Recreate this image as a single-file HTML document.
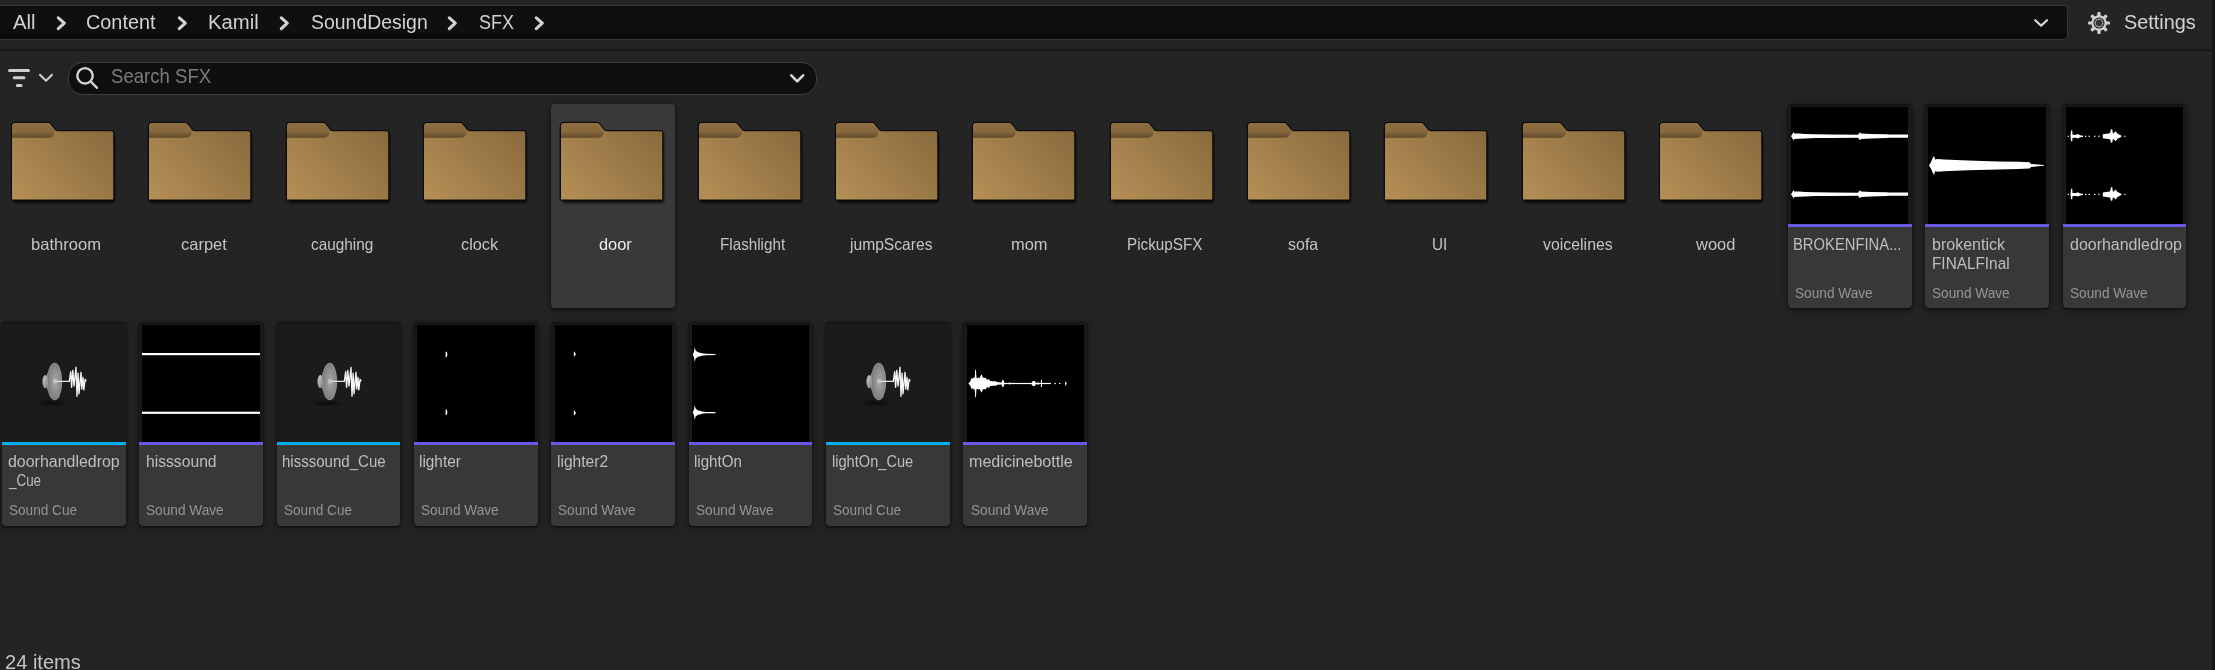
<!DOCTYPE html><html><head><meta charset="utf-8"><style>
*{margin:0;padding:0;box-sizing:border-box}
html,body{width:2215px;height:670px;overflow:hidden;background:#242424}
body{position:relative;font-family:"Liberation Sans",sans-serif}
.a{position:absolute}
.t{position:absolute;white-space:pre;line-height:1;transform-origin:0 0}
svg{position:absolute;overflow:visible}
.tile{position:absolute;border-radius:4px;box-shadow:0 1px 2.5px rgba(0,0,0,.55),0 2px 8px rgba(0,0,0,.4)}
.lab{position:absolute;left:0;right:0;bottom:0;background:#383838;border-radius:0 0 4px 4px}
</style></head><body><div class="a" style="left:0;top:0;width:2215px;height:50px;background:#242424"></div>
<div class="a" style="left:0;top:49.0px;width:2215px;height:3.4px;background:linear-gradient(#191919,#171717 45%,#1d1d1d 70%,#242424)"></div>
<div class="a" style="left:-6px;top:5.4px;width:2074.3px;height:34.3px;background:linear-gradient(#0f0f0f 0,#0f0f0f 76%,#0a0a0a 88%,#0b0b0b 100%);border:1.8px solid #353535;border-radius:4px"></div>
<div class="t" style="left:13.30px;top:12.07px;font-size:20px;color:#d2d2d2;transform:scaleX(1.0145)">All</div>
<div class="t" style="left:86.21px;top:12.07px;font-size:20px;color:#d2d2d2;transform:scaleX(0.9915)">Content</div>
<div class="t" style="left:207.58px;top:12.07px;font-size:20px;color:#d2d2d2;transform:scaleX(1.0151)">Kamil</div>
<div class="t" style="left:311.00px;top:12.07px;font-size:20px;color:#d2d2d2;transform:scaleX(0.9717)">SoundDesign</div>
<div class="t" style="left:478.50px;top:12.07px;font-size:20px;color:#d2d2d2;transform:scaleX(0.9000)">SFX</div>
<svg style="left:56.30px;top:15.7px" width="11" height="14"><polyline points="2.3,1.8 8.3,7.2 2.3,12.6" fill="none" stroke="#d2d2d2" stroke-width="3.1" stroke-linecap="round" stroke-linejoin="round"/></svg>
<svg style="left:176.60px;top:15.7px" width="11" height="14"><polyline points="2.3,1.8 8.3,7.2 2.3,12.6" fill="none" stroke="#d2d2d2" stroke-width="3.1" stroke-linecap="round" stroke-linejoin="round"/></svg>
<svg style="left:279.00px;top:15.7px" width="11" height="14"><polyline points="2.3,1.8 8.3,7.2 2.3,12.6" fill="none" stroke="#d2d2d2" stroke-width="3.1" stroke-linecap="round" stroke-linejoin="round"/></svg>
<svg style="left:447.00px;top:15.7px" width="11" height="14"><polyline points="2.3,1.8 8.3,7.2 2.3,12.6" fill="none" stroke="#d2d2d2" stroke-width="3.1" stroke-linecap="round" stroke-linejoin="round"/></svg>
<svg style="left:534.00px;top:15.7px" width="11" height="14"><polyline points="2.3,1.8 8.3,7.2 2.3,12.6" fill="none" stroke="#d2d2d2" stroke-width="3.1" stroke-linecap="round" stroke-linejoin="round"/></svg>
<svg style="left:2034px;top:19px" width="15" height="8"><polyline points="1.2,1.2 7.1,6.6 13,1.2" fill="none" stroke="#d6d6d6" stroke-width="2.2" stroke-linecap="round" stroke-linejoin="round"/></svg>
<svg style="left:2098.9px;top:22.7px" width="1" height="1"><g fill="#d2d2d2"><rect x="-1.6" y="-10.9" width="3.2" height="5.5" rx="0.9" transform="rotate(0)"/><rect x="-1.6" y="-10.9" width="3.2" height="5.5" rx="0.9" transform="rotate(45)"/><rect x="-1.6" y="-10.9" width="3.2" height="5.5" rx="0.9" transform="rotate(90)"/><rect x="-1.6" y="-10.9" width="3.2" height="5.5" rx="0.9" transform="rotate(135)"/><rect x="-1.6" y="-10.9" width="3.2" height="5.5" rx="0.9" transform="rotate(180)"/><rect x="-1.6" y="-10.9" width="3.2" height="5.5" rx="0.9" transform="rotate(225)"/><rect x="-1.6" y="-10.9" width="3.2" height="5.5" rx="0.9" transform="rotate(270)"/><rect x="-1.6" y="-10.9" width="3.2" height="5.5" rx="0.9" transform="rotate(315)"/><circle r="7.7"/></g><circle r="5.5" fill="#1c1c1c"/><circle r="3.7" fill="none" stroke="#989898" stroke-width="1.5"/><circle r="2.9" fill="#333"/></svg>
<div class="t" style="left:2123.90px;top:11.87px;font-size:20px;color:#d2d2d2;transform:scaleX(0.9922)">Settings</div>
<div class="a" style="left:2212.3px;top:0;width:3px;height:670px;background:#171717"></div>
<svg style="left:0;top:60px" width="60" height="30"><g stroke="#d0d0d0" stroke-width="3" stroke-linecap="round"><line x1="9.5" y1="10.4" x2="28.5" y2="10.4"/><line x1="14.3" y1="17.8" x2="23.9" y2="17.8"/><line x1="17.3" y1="25.6" x2="21" y2="25.6"/></g><polyline points="40,14.8 46,20.8 52,14.8" fill="none" stroke="#d0d0d0" stroke-width="2" stroke-linecap="round" stroke-linejoin="round"/></svg>
<div class="a" style="left:68px;top:61.5px;width:748.7px;height:33.3px;background:#0f0f0f;border:1.8px solid #3d3d3d;border-radius:15px"></div>
<svg style="left:0;top:0" width="1" height="1"><circle cx="85" cy="75.8" r="7.7" fill="none" stroke="#d4d4d4" stroke-width="2.4"/><line x1="90.6" y1="81.4" x2="97" y2="87.9" stroke="#d4d4d4" stroke-width="2.3" stroke-linecap="round"/></svg>
<div class="t" style="left:110.80px;top:65.12px;font-size:21px;color:#7c7c7c;transform:scaleX(0.8842)">Search SFX</div>
<svg style="left:789.9px;top:74px" width="15" height="9"><polyline points="1.3,1.3 7.2,7.4 13.1,1.3" fill="none" stroke="#d8d8d8" stroke-width="2.6" stroke-linecap="round" stroke-linejoin="round"/></svg>
<svg width="0" height="0" style="position:absolute"><defs>
<linearGradient id="fb" x1="0" y1="0.85" x2="1" y2="0.15"><stop offset="0" stop-color="#b28d55"/><stop offset="1" stop-color="#8a6b3e"/></linearGradient>
<linearGradient id="ft" x1="0" y1="0" x2="0" y2="1"><stop offset="0" stop-color="#8e6e40"/><stop offset="0.55" stop-color="#89693c"/><stop offset="0.8" stop-color="#735832"/><stop offset="1" stop-color="#5f4a2b"/></linearGradient>
<filter id="fs" x="-10%" y="-10%" width="130%" height="130%"><feGaussianBlur stdDeviation="1.2"/></filter>
<radialGradient id="cone" cx="0.55" cy="0.5" r="0.6"><stop offset="0" stop-color="#a8a8a8"/><stop offset="0.7" stop-color="#858585"/><stop offset="1" stop-color="#6e6e6e"/></radialGradient><linearGradient id="cyl" x1="0" y1="0" x2="1" y2="1"><stop offset="0" stop-color="#d0d0d0"/><stop offset="1" stop-color="#7a7a7a"/></linearGradient>
<filter id="blur1"><feGaussianBlur stdDeviation="1.5"/></filter>
<symbol id="folder" overflow="visible">
<rect x="1.5" y="10" width="101.5" height="70" rx="2" fill="#000" opacity="0.75" filter="url(#fs)"/>
<path d="M0,3.5 Q0,0 3.5,0 L35.5,0 Q37,0 38,1 L42.6,6.8 Q43.9,8.2 45.6,8.2 L99.5,8.2 Q101.2,8.2 101.2,10 L101.2,76.5 L0,76.5 Z" fill="none" stroke="#0d0d0d" stroke-width="2.6" stroke-linejoin="round"/>
<path d="M0,3.5 Q0,0 3.5,0 L35.5,0 Q37,0 38,1 L42.6,6.8 Q43.9,8.2 45.6,8.2 L99.5,8.2 Q101.2,8.2 101.2,10 L101.2,76.5 L0,76.5 Z" fill="url(#fb)"/>
<path d="M0,3.5 Q0,0 3.5,0 L35.5,0 Q37,0 38,1 L41.5,5.2 Q43.6,7.8 42.6,10.5 Q40.8,14.8 36.5,14.8 L0,14.8 Z" fill="url(#ft)"/>
</symbol>
<symbol id="cue" overflow="visible">
<ellipse cx="50" cy="81.3" rx="13" ry="2" fill="#000" opacity="0.55" filter="url(#blur1)"/>
<ellipse cx="43.4" cy="59.6" rx="2.9" ry="6.6" fill="url(#cyl)"/>
<path d="M45.3,53 L48.5,44 Q52.5,38.5 56.5,43.5 Q59.8,50.5 59.8,59.5 Q59.8,68.5 56.5,75.5 Q52.5,80.5 48.5,75 L45.3,66 Z" fill="url(#cone)" stroke="#a6a6a6" stroke-width="0.7"/>
<ellipse cx="53.5" cy="59.4" rx="4.2" ry="12.5" fill="none" stroke="#8e8e8e" stroke-width="0.8"/>
<circle cx="53.1" cy="59.3" r="2.3" fill="#c2c2c2"/>
<line x1="55" y1="59.4" x2="68" y2="59.4" stroke="#e2e2e2" stroke-width="1.2"/>
<path d="M67.3,59.4 L68.7,49.7 L69.6,65.3 L70.8,48.3 L72,64 L74,45.3 L75,74.3 L76.1,51.3 L77,71.8 L79,50.3 L79.8,67 L81,55.3 L81.8,67.8 L83.1,57.3 L84.2,59.4" fill="none" stroke="#f4f4f4" stroke-width="1.35" stroke-linejoin="round"/>
</symbol>
</defs></svg>
<svg style="left:11.90px;top:123.00px" width="1" height="1"><use href="#folder"/></svg>
<div class="t" style="left:31.20px;top:235.73px;font-size:16.5px;color:#c4c4c4;transform:scaleX(1.0050)">bathroom</div>
<svg style="left:149.23px;top:123.00px" width="1" height="1"><use href="#folder"/></svg>
<div class="t" style="left:181.40px;top:235.73px;font-size:16.5px;color:#c4c4c4;transform:scaleX(0.9984)">carpet</div>
<svg style="left:286.56px;top:123.00px" width="1" height="1"><use href="#folder"/></svg>
<div class="t" style="left:310.50px;top:235.73px;font-size:16.5px;color:#c4c4c4;transform:scaleX(0.9297)">caughing</div>
<svg style="left:423.89px;top:123.00px" width="1" height="1"><use href="#folder"/></svg>
<div class="t" style="left:460.50px;top:235.73px;font-size:16.5px;color:#c4c4c4;transform:scaleX(0.9885)">clock</div>
<div class="tile" style="left:551.32px;top:104.00px;width:123.8px;height:204.2px;background:#393939;"></div>
<svg style="left:561.22px;top:123.00px" width="1" height="1"><use href="#folder"/></svg>
<div class="t" style="left:599.30px;top:235.73px;font-size:16.5px;color:#ececec;transform:scaleX(0.9932)">door</div>
<svg style="left:698.55px;top:123.00px" width="1" height="1"><use href="#folder"/></svg>
<div class="t" style="left:720.08px;top:235.73px;font-size:16.5px;color:#c4c4c4;transform:scaleX(0.9224)">Flashlight</div>
<svg style="left:835.88px;top:123.00px" width="1" height="1"><use href="#folder"/></svg>
<div class="t" style="left:849.85px;top:235.73px;font-size:16.5px;color:#c4c4c4;transform:scaleX(0.9469)">jumpScares</div>
<svg style="left:973.21px;top:123.00px" width="1" height="1"><use href="#folder"/></svg>
<div class="t" style="left:1010.60px;top:235.73px;font-size:16.5px;color:#c4c4c4;transform:scaleX(0.9965)">mom</div>
<svg style="left:1110.54px;top:123.00px" width="1" height="1"><use href="#folder"/></svg>
<div class="t" style="left:1127.33px;top:235.73px;font-size:16.5px;color:#c4c4c4;transform:scaleX(0.9242)">PickupSFX</div>
<svg style="left:1247.87px;top:123.00px" width="1" height="1"><use href="#folder"/></svg>
<div class="t" style="left:1287.50px;top:235.73px;font-size:16.5px;color:#c4c4c4;transform:scaleX(0.9684)">sofa</div>
<svg style="left:1385.20px;top:123.00px" width="1" height="1"><use href="#folder"/></svg>
<div class="t" style="left:1432.37px;top:235.73px;font-size:16.5px;color:#c4c4c4;transform:scaleX(0.9319)">UI</div>
<svg style="left:1522.53px;top:123.00px" width="1" height="1"><use href="#folder"/></svg>
<div class="t" style="left:1543.00px;top:235.73px;font-size:16.5px;color:#c4c4c4;transform:scaleX(0.9626)">voicelines</div>
<svg style="left:1659.86px;top:123.00px" width="1" height="1"><use href="#folder"/></svg>
<div class="t" style="left:1696.40px;top:235.73px;font-size:16.5px;color:#c4c4c4;transform:scaleX(0.9983)">wood</div>
<div class="tile" style="left:1787.74px;top:104.00px;width:123.8px;height:204.2px;background:#1a1a1a;overflow:hidden">
<div class="a" style="left:0;top:0;width:100%;height:2.2px;background:rgba(0,0,0,.2)"></div><div class="a" style="left:0;top:0;width:1.8px;height:120px;background:rgba(0,0,0,.1)"></div>
<div class="a" style="left:3.2px;top:3px;width:117.40px;height:116.90px;background:#000;overflow:hidden"><svg style="left:0;top:0" width="118" height="117"><g fill="#fff"><path d="M0,29.2 L1.6,26.7 L2.3,25.0 L3.2,26.4 L8,26.599999999999998 L14,27.0 L25,27.3 L40,27.5 L67,27.7 L68.3,26.0 L69,25.2 L70,26.4 L80,27.0 L96,27.3 L97,27.599999999999998 L118,27.599999999999998 L118,30.8 L97,30.8 L96,31.099999999999998 L80,31.4 L70,32.0 L69,33.2 L68.3,32.4 L67,30.7 L40,30.9 L25,31.099999999999998 L14,31.4 L8,31.8 L3.2,32.0 L2.3,33.4 L1.6,31.7 Z"/><path d="M0,87.2 L1.6,84.7 L2.3,83.0 L3.2,84.4 L8,84.60000000000001 L14,85.0 L25,85.3 L40,85.5 L67,85.7 L68.3,84.0 L69,83.2 L70,84.4 L80,85.0 L96,85.3 L97,85.60000000000001 L118,85.60000000000001 L118,88.8 L97,88.8 L96,89.10000000000001 L80,89.4 L70,90.0 L69,91.2 L68.3,90.4 L67,88.7 L40,88.9 L25,89.10000000000001 L14,89.4 L8,89.8 L3.2,90.0 L2.3,91.4 L1.6,89.7 Z"/></g></svg></div>
<div class="a" style="left:0;top:119.9px;width:123.8px;height:3.4px;background:#6858e6"></div>
<div class="lab" style="top:123.30000000000001px"></div>
</div>
<div class="t" style="left:1793.18px;top:237.16px;font-size:16px;color:#bebebe;transform:scaleX(0.9242)">BROKENFINA...</div>
<div class="t" style="left:1794.84px;top:285.10px;font-size:15px;color:#959595;transform:scaleX(0.9108)">Sound Wave</div>
<div class="tile" style="left:1925.12px;top:104.00px;width:123.8px;height:204.2px;background:#1a1a1a;overflow:hidden">
<div class="a" style="left:0;top:0;width:100%;height:2.2px;background:rgba(0,0,0,.2)"></div><div class="a" style="left:0;top:0;width:1.8px;height:120px;background:rgba(0,0,0,.1)"></div>
<div class="a" style="left:3.2px;top:3px;width:117.40px;height:116.90px;background:#000;overflow:hidden"><svg style="left:0;top:0" width="118" height="117"><g fill="#fff"><path d="M1,58.4 L3,55 L5.2,50 L6.2,49 L7,52.5 L10,52 L16,52.6 L40,53.6 L70,54.4 L90,54.8 L101.5,55.2 L103,56.9 L110,57.6 L116,58.1 L116,58.7 L110,59.2 L103,60 L101.5,61.6 L90,62 L70,62.4 L40,63.2 L16,64.2 L10,64.8 L7,64.3 L6.2,67.8 L5.2,66.8 L3,61.8 Z"/></g></svg></div>
<div class="a" style="left:0;top:119.9px;width:123.8px;height:3.4px;background:#6858e6"></div>
<div class="lab" style="top:123.30000000000001px"></div>
</div>
<div class="t" style="left:1931.50px;top:237.16px;font-size:16px;color:#bebebe;transform:scaleX(1.0011)">brokentick</div>
<div class="t" style="left:1931.54px;top:256.16px;font-size:16px;color:#bebebe;transform:scaleX(0.9589)">FINALFInal</div>
<div class="t" style="left:1932.22px;top:285.10px;font-size:15px;color:#959595;transform:scaleX(0.9108)">Sound Wave</div>
<div class="tile" style="left:2062.50px;top:104.00px;width:123.8px;height:204.2px;background:#1a1a1a;overflow:hidden">
<div class="a" style="left:0;top:0;width:100%;height:2.2px;background:rgba(0,0,0,.2)"></div><div class="a" style="left:0;top:0;width:1.8px;height:120px;background:rgba(0,0,0,.1)"></div>
<div class="a" style="left:3.2px;top:3px;width:117.40px;height:116.90px;background:#000;overflow:hidden"><svg style="left:0;top:0" width="118" height="117"><g fill="#fff"><rect x="1.6" y="28.7" width="1.2" height="1.2"/><path d="M4.5,29.3 L5,23.6 L6.3,23.6 L6.5,27.8 L10,27.8 L12,27.1 L14,28.3 L17,28.7 L17,29.900000000000002 L14,30.3 L12,31.5 L10,30.8 L6.5,30.8 L6.3,34.2 L5,34.2 Z"/><rect x="19" y="28.7" width="1.3" height="1.2"/><rect x="22.5" y="28.7" width="1.3" height="1.2"/><rect x="28" y="28.7" width="1.3" height="1.2"/><rect x="32.3" y="28.7" width="1.3" height="1.2"/><path d="M36.8,27.3 L44,26.3 L45,22.200000000000003 L46.2,22.200000000000003 L47,26.8 L49.6,24.3 L51.5,26.8 L55.3,28.6 L55.3,30.0 L51.5,31.8 L49.6,34.3 L47,31.8 L46.2,35.7 L45,35.7 L44,32.3 L36.8,31.3 Z"/><rect x="58.3" y="28.7" width="1.2" height="1.2"/><rect x="1.6" y="86.80000000000001" width="1.2" height="1.2"/><path d="M4.5,87.4 L5,81.7 L6.3,81.7 L6.5,85.9 L10,85.9 L12,85.2 L14,86.4 L17,86.80000000000001 L17,88.0 L14,88.4 L12,89.60000000000001 L10,88.9 L6.5,88.9 L6.3,92.30000000000001 L5,92.30000000000001 Z"/><rect x="19" y="86.80000000000001" width="1.3" height="1.2"/><rect x="22.5" y="86.80000000000001" width="1.3" height="1.2"/><rect x="28" y="86.80000000000001" width="1.3" height="1.2"/><rect x="32.3" y="86.80000000000001" width="1.3" height="1.2"/><path d="M36.8,85.4 L44,84.4 L45,80.30000000000001 L46.2,80.30000000000001 L47,84.9 L49.6,82.4 L51.5,84.9 L55.3,86.7 L55.3,88.10000000000001 L51.5,89.9 L49.6,92.4 L47,89.9 L46.2,93.80000000000001 L45,93.80000000000001 L44,90.4 L36.8,89.4 Z"/><rect x="58.3" y="86.80000000000001" width="1.2" height="1.2"/></g></svg></div>
<div class="a" style="left:0;top:119.9px;width:123.8px;height:3.4px;background:#6858e6"></div>
<div class="lab" style="top:123.30000000000001px"></div>
</div>
<div class="t" style="left:2069.60px;top:237.16px;font-size:16px;color:#bebebe;transform:scaleX(0.9983)">doorhandledrop</div>
<div class="t" style="left:2069.60px;top:285.10px;font-size:15px;color:#959595;transform:scaleX(0.9108)">Sound Wave</div>
<div class="tile" style="left:1.80px;top:321.70px;width:123.8px;height:204.2px;background:#1b1b1b;overflow:hidden">
<div class="a" style="left:0;top:0;width:100%;height:2.2px;background:rgba(0,0,0,.2)"></div><div class="a" style="left:0;top:0;width:1.8px;height:120px;background:rgba(0,0,0,.1)"></div>
<svg style="left:0;top:0" width="1" height="1"><use href="#cue"/></svg>
<div class="a" style="left:0;top:119.9px;width:123.8px;height:3.4px;background:#00aef0"></div>
<div class="lab" style="top:123.30000000000001px"></div>
</div>
<div class="t" style="left:8.20px;top:454.36px;font-size:16px;color:#bebebe;transform:scaleX(0.9965)">doorhandledrop</div>
<div class="t" style="left:9.04px;top:473.36px;font-size:16px;color:#bebebe;transform:scaleX(0.8386)">_Cue</div>
<div class="t" style="left:8.90px;top:501.60px;font-size:15px;color:#959595;transform:scaleX(0.9061)">Sound Cue</div>
<div class="tile" style="left:139.18px;top:321.70px;width:123.8px;height:204.2px;background:#1a1a1a;overflow:hidden">
<div class="a" style="left:0;top:0;width:100%;height:2.2px;background:rgba(0,0,0,.2)"></div><div class="a" style="left:0;top:0;width:1.8px;height:120px;background:rgba(0,0,0,.1)"></div>
<div class="a" style="left:3.2px;top:3px;width:117.40px;height:116.90px;background:#000;overflow:hidden"><svg style="left:0;top:0" width="118" height="117"><g fill="#fff"><rect x="0" y="28.0" width="118" height="2.2"/><rect x="0" y="86.7" width="118" height="2.2"/></g></svg></div>
<div class="a" style="left:0;top:119.9px;width:123.8px;height:3.4px;background:#6858e6"></div>
<div class="lab" style="top:123.30000000000001px"></div>
</div>
<div class="t" style="left:145.52px;top:454.36px;font-size:16px;color:#bebebe;transform:scaleX(0.9794)">hisssound</div>
<div class="t" style="left:146.28px;top:501.60px;font-size:15px;color:#959595;transform:scaleX(0.9108)">Sound Wave</div>
<div class="tile" style="left:276.56px;top:321.70px;width:123.8px;height:204.2px;background:#1b1b1b;overflow:hidden">
<div class="a" style="left:0;top:0;width:100%;height:2.2px;background:rgba(0,0,0,.2)"></div><div class="a" style="left:0;top:0;width:1.8px;height:120px;background:rgba(0,0,0,.1)"></div>
<svg style="left:0;top:0" width="1" height="1"><use href="#cue"/></svg>
<div class="a" style="left:0;top:119.9px;width:123.8px;height:3.4px;background:#00aef0"></div>
<div class="lab" style="top:123.30000000000001px"></div>
</div>
<div class="t" style="left:282.36px;top:454.36px;font-size:16px;color:#bebebe;transform:scaleX(0.9397)">hisssound_Cue</div>
<div class="t" style="left:283.66px;top:501.60px;font-size:15px;color:#959595;transform:scaleX(0.9061)">Sound Cue</div>
<div class="tile" style="left:413.94px;top:321.70px;width:123.8px;height:204.2px;background:#1a1a1a;overflow:hidden">
<div class="a" style="left:0;top:0;width:100%;height:2.2px;background:rgba(0,0,0,.2)"></div><div class="a" style="left:0;top:0;width:1.8px;height:120px;background:rgba(0,0,0,.1)"></div>
<div class="a" style="left:3.2px;top:3px;width:117.40px;height:116.90px;background:#000;overflow:hidden"><svg style="left:0;top:0" width="118" height="117"><g fill="#fff"><path d="M28.6,26.8 L29.8,26.8 L30.0,28.7 L30.8,29.5 L30.0,30.3 L29.8,32.2 L28.6,32.2 Z"/><path d="M28.6,84.5 L29.8,84.5 L30.0,86.4 L30.8,87.2 L30.0,88.0 L29.8,89.9 L28.6,89.9 Z"/></g></svg></div>
<div class="a" style="left:0;top:119.9px;width:123.8px;height:3.4px;background:#6858e6"></div>
<div class="lab" style="top:123.30000000000001px"></div>
</div>
<div class="t" style="left:419.44px;top:454.36px;font-size:16px;color:#bebebe;transform:scaleX(0.9595)">lighter</div>
<div class="t" style="left:421.04px;top:501.60px;font-size:15px;color:#959595;transform:scaleX(0.9108)">Sound Wave</div>
<div class="tile" style="left:551.32px;top:321.70px;width:123.8px;height:204.2px;background:#1a1a1a;overflow:hidden">
<div class="a" style="left:0;top:0;width:100%;height:2.2px;background:rgba(0,0,0,.2)"></div><div class="a" style="left:0;top:0;width:1.8px;height:120px;background:rgba(0,0,0,.1)"></div>
<div class="a" style="left:3.2px;top:3px;width:117.40px;height:116.90px;background:#000;overflow:hidden"><svg style="left:0;top:0" width="118" height="117"><g fill="#fff"><path d="M18.8,26.2 L21.1,29.0 L18.8,31.8 Z"/><path d="M18.8,85.10000000000001 L21.1,87.9 L18.8,90.7 Z"/></g></svg></div>
<div class="a" style="left:0;top:119.9px;width:123.8px;height:3.4px;background:#6858e6"></div>
<div class="lab" style="top:123.30000000000001px"></div>
</div>
<div class="t" style="left:557.22px;top:454.36px;font-size:16px;color:#bebebe;transform:scaleX(0.9752)">lighter2</div>
<div class="t" style="left:558.42px;top:501.60px;font-size:15px;color:#959595;transform:scaleX(0.9108)">Sound Wave</div>
<div class="tile" style="left:688.70px;top:321.70px;width:123.8px;height:204.2px;background:#1a1a1a;overflow:hidden">
<div class="a" style="left:0;top:0;width:100%;height:2.2px;background:rgba(0,0,0,.2)"></div><div class="a" style="left:0;top:0;width:1.8px;height:120px;background:rgba(0,0,0,.1)"></div>
<div class="a" style="left:3.2px;top:3px;width:117.40px;height:116.90px;background:#000;overflow:hidden"><svg style="left:0;top:0" width="118" height="117"><g fill="#fff"><path d="M0.7,29.5 L2,26.5 L2.7,22.1 L3.6,25.5 L6,27.3 L8,27.7 L10,28.3 L14,28.8 L23.5,28.9 L23.5,30.1 L14,30.2 L10,30.7 L8,31.3 L6,31.7 L3.6,33.5 L2.7,36.9 L2,32.5 Z"/><path d="M0.7,87.6 L2,84.6 L2.7,80.19999999999999 L3.6,83.6 L6,85.39999999999999 L8,85.8 L10,86.39999999999999 L14,86.89999999999999 L23.5,87.0 L23.5,88.19999999999999 L14,88.3 L10,88.8 L8,89.39999999999999 L6,89.8 L3.6,91.6 L2.7,95.0 L2,90.6 Z"/></g></svg></div>
<div class="a" style="left:0;top:119.9px;width:123.8px;height:3.4px;background:#6858e6"></div>
<div class="lab" style="top:123.30000000000001px"></div>
</div>
<div class="t" style="left:694.46px;top:454.36px;font-size:16px;color:#bebebe;transform:scaleX(0.9447)">lightOn</div>
<div class="t" style="left:695.80px;top:501.60px;font-size:15px;color:#959595;transform:scaleX(0.9108)">Sound Wave</div>
<div class="tile" style="left:826.08px;top:321.70px;width:123.8px;height:204.2px;background:#1b1b1b;overflow:hidden">
<div class="a" style="left:0;top:0;width:100%;height:2.2px;background:rgba(0,0,0,.2)"></div><div class="a" style="left:0;top:0;width:1.8px;height:120px;background:rgba(0,0,0,.1)"></div>
<svg style="left:0;top:0" width="1" height="1"><use href="#cue"/></svg>
<div class="a" style="left:0;top:119.9px;width:123.8px;height:3.4px;background:#00aef0"></div>
<div class="lab" style="top:123.30000000000001px"></div>
</div>
<div class="t" style="left:832.29px;top:454.36px;font-size:16px;color:#bebebe;transform:scaleX(0.9131)">lightOn_Cue</div>
<div class="t" style="left:833.18px;top:501.60px;font-size:15px;color:#959595;transform:scaleX(0.9061)">Sound Cue</div>
<div class="tile" style="left:963.46px;top:321.70px;width:123.8px;height:204.2px;background:#1a1a1a;overflow:hidden">
<div class="a" style="left:0;top:0;width:100%;height:2.2px;background:rgba(0,0,0,.2)"></div><div class="a" style="left:0;top:0;width:1.8px;height:120px;background:rgba(0,0,0,.1)"></div>
<div class="a" style="left:3.2px;top:3px;width:117.40px;height:116.90px;background:#000;overflow:hidden"><svg style="left:0;top:0" width="118" height="117"><g fill="#fff"><rect x="36" y="57.9" width="48" height="1.2"/><path d="M1.3,58.5 L2.5,57.3 L3.5,56.0 L4.3,53.0 L5.2,54.3 L6,52.3 L7,53.5 L7.8,52.0 L8.2,44.8 L9,44.8 L9.4,52.5 L10.5,53.3 L11.5,52.5 L12.5,53.1 L13.6,51.0 L14.2,49.7 L15,49.7 L15.6,52.3 L17,52.9 L18.5,52.5 L19.5,54.0 L20.5,55.0 L21.4,54.3 L22.3,54.3 L23,55.9 L25,56.1 L26.5,56.5 L28,56.1 L29.5,56.7 L31,57.3 L34.5,57.6 L35.2,55.0 L36.4,55.0 L37.5,57.9 L37.5,59.1 L36.4,62.0 L35.2,62.0 L34.5,59.4 L31,59.7 L29.5,60.3 L28,60.9 L26.5,60.5 L25,60.9 L23,61.1 L22.3,62.7 L21.4,62.7 L20.5,62.0 L19.5,63.0 L18.5,64.5 L17,64.1 L15.6,64.7 L15,67.3 L14.2,67.3 L13.6,66.0 L12.5,63.9 L11.5,64.5 L10.5,63.7 L9.4,64.5 L9,72.2 L8.2,72.2 L7.8,65.0 L7,63.5 L6,64.7 L5.2,62.7 L4.3,64.0 L3.5,61.0 L2.5,59.7 L1.3,58.5 Z"/><circle cx="42.7" cy="58.5" r="0.9"/><path d="M64,58.5 L65.8,55.9 L67.8,55.9 L69.5,58.5 L67.8,61.1 L65.8,61.1 Z"/><rect x="70.5" y="57.0" width="1" height="3"/><rect x="73.9" y="55.0" width="1.1" height="7"/><rect x="87.5" y="57.9" width="1.4" height="1.2"/><rect x="92" y="57.9" width="1.4" height="1.2"/><path d="M98.2,56.0 L99.9,58.5 L98.2,61.0 Z"/></g></svg></div>
<div class="a" style="left:0;top:119.9px;width:123.8px;height:3.4px;background:#6858e6"></div>
<div class="lab" style="top:123.30000000000001px"></div>
</div>
<div class="t" style="left:968.89px;top:454.36px;font-size:16px;color:#bebebe;transform:scaleX(1.0061)">medicinebottle</div>
<div class="t" style="left:970.56px;top:501.60px;font-size:15px;color:#959595;transform:scaleX(0.9108)">Sound Wave</div>
<div class="t" style="left:4.70px;top:652.07px;font-size:20px;color:#c4c4c4;transform:scaleX(1.0029)">24 items</div></body></html>
